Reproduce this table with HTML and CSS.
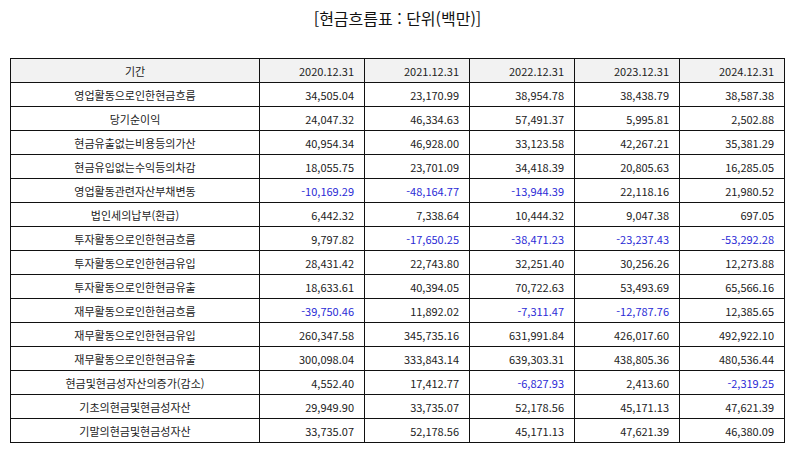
FILE: index.html
```html
<!DOCTYPE html>
<html lang="ko">
<head>
<meta charset="utf-8">
<link rel="stylesheet" href="styles.css">
</head>
<body>
<div class="page">
  <h1 class="title">[현금흐름표 : 단위(백만)]</h1>
  <table class="cf">
    <colgroup>
      <col class="c-label"><col class="c-num"><col class="c-num"><col class="c-num"><col class="c-num"><col class="c-num">
    </colgroup>
    <thead>
      <tr><th class="lbl">기간</th><th>2020.12.31</th><th>2021.12.31</th><th>2022.12.31</th><th>2023.12.31</th><th>2024.12.31</th></tr>
    </thead>
    <tbody>
      <tr><td class="lbl">영업활동으로인한현금흐름</td><td>34,505.04</td><td>23,170.99</td><td>38,954.78</td><td>38,438.79</td><td>38,587.38</td></tr>
      <tr><td class="lbl">당기순이익</td><td>24,047.32</td><td>46,334.63</td><td>57,491.37</td><td>5,995.81</td><td>2,502.88</td></tr>
      <tr><td class="lbl">현금유출없는비용등의가산</td><td>40,954.34</td><td>46,928.00</td><td>33,123.58</td><td>42,267.21</td><td>35,381.29</td></tr>
      <tr><td class="lbl">현금유입없는수익등의차감</td><td>18,055.75</td><td>23,701.09</td><td>34,418.39</td><td>20,805.63</td><td>16,285.05</td></tr>
      <tr><td class="lbl">영업활동관련자산부채변동</td><td class="neg">-10,169.29</td><td class="neg">-48,164.77</td><td class="neg">-13,944.39</td><td>22,118.16</td><td>21,980.52</td></tr>
      <tr><td class="lbl">법인세의납부(환급)</td><td>6,442.32</td><td>7,338.64</td><td>10,444.32</td><td>9,047.38</td><td>697.05</td></tr>
      <tr><td class="lbl">투자활동으로인한현금흐름</td><td>9,797.82</td><td class="neg">-17,650.25</td><td class="neg">-38,471.23</td><td class="neg">-23,237.43</td><td class="neg">-53,292.28</td></tr>
      <tr><td class="lbl">투자활동으로인한현금유입</td><td>28,431.42</td><td>22,743.80</td><td>32,251.40</td><td>30,256.26</td><td>12,273.88</td></tr>
      <tr><td class="lbl">투자활동으로인한현금유출</td><td>18,633.61</td><td>40,394.05</td><td>70,722.63</td><td>53,493.69</td><td>65,566.16</td></tr>
      <tr><td class="lbl">재무활동으로인한현금흐름</td><td class="neg">-39,750.46</td><td>11,892.02</td><td class="neg">-7,311.47</td><td class="neg">-12,787.76</td><td>12,385.65</td></tr>
      <tr><td class="lbl">재무활동으로인한현금유입</td><td>260,347.58</td><td>345,735.16</td><td>631,991.84</td><td>426,017.60</td><td>492,922.10</td></tr>
      <tr><td class="lbl">재무활동으로인한현금유출</td><td>300,098.04</td><td>333,843.14</td><td>639,303.31</td><td>438,805.36</td><td>480,536.44</td></tr>
      <tr><td class="lbl">현금및현금성자산의증가(감소)</td><td>4,552.40</td><td>17,412.77</td><td class="neg">-6,827.93</td><td>2,413.60</td><td class="neg">-2,319.25</td></tr>
      <tr><td class="lbl">기초의현금및현금성자산</td><td>29,949.90</td><td>33,735.07</td><td>52,178.56</td><td>45,171.13</td><td>47,621.39</td></tr>
      <tr><td class="lbl">기말의현금및현금성자산</td><td>33,735.07</td><td>52,178.56</td><td>45,171.13</td><td>47,621.39</td><td>46,380.09</td></tr>
    </tbody>
  </table>
</div>
</body>
</html>
```

FILE: styles.css
```css
html, body {
  margin: 0;
  padding: 0;
  background: #ffffff;
}
.page {
  padding: 8px 9px 0 10px;
  font-family: "Noto Sans CJK KR", "Noto Sans", sans-serif;
  color: #222222;
}
.title {
  margin: 0;
  height: 50px;
  font-size: 16px;
  font-weight: normal;
  line-height: 20px;
  text-align: center;
  color: #111111;
}
.cf {
  width: 775px;
  border-collapse: collapse;
  table-layout: fixed;
  font-size: 11px;
}
.c-label { width: 249px; }
.c-num { width: 105px; }
.cf th, .cf td {
  border: 1px solid #111111;
  height: 23px;
  padding: 0 10px;
  line-height: 14px;
  text-align: right;
  font-weight: normal;
  white-space: nowrap;
}
.cf thead th {
  background: #f2f2f2;
}
.cf .lbl {
  text-align: center;
}
.cf .neg {
  color: #2b2bd6;
}
```
